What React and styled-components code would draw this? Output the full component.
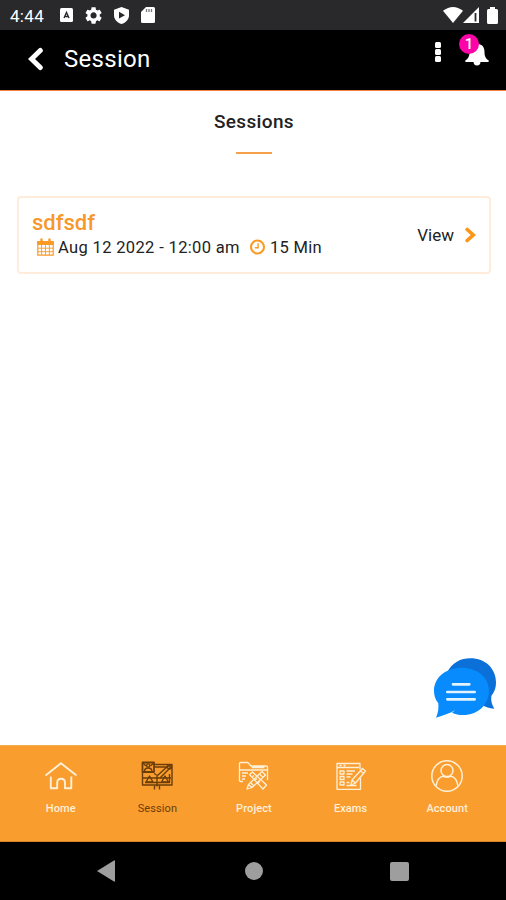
import React from 'react';
import styled, { createGlobalStyle } from 'styled-components';

function App() {
    return (
        <>
            <GlobalStyle />
            <Screen>
                <StatusBar>
                    <Clock>4:44</Clock>
                    <StatusLeft>
                        <KeyboardIcon />
                        <GearIcon />
                        <ShieldIcon />
                        <CardIcon />
                    </StatusLeft>
                    <StatusRight>
                        <WifiIcon />
                        <SignalIcon />
                        <BatteryIcon />
                    </StatusRight>
                </StatusBar>
                <Header>
                    <BackIcon />
                    <HeaderTitle>Session</HeaderTitle>
                    <Dots>
                        <Dot />
                        <Dot />
                        <Dot />
                    </Dots>
                    <BellButton>
                        <BellIcon />
                        <Badge>1</Badge>
                    </BellButton>
                </Header>
                <Content>
                    <Heading>Sessions</Heading>
                    <HeadingLine />
                    <SessionCard>
                        <SessionInfo>
                            <SessionName>sdfsdf</SessionName>
                            <SessionMeta>
                                <CalendarIcon />
                                <MetaText $width="182px" $spacing=".35px">Aug 12 2022 - 12:00 am</MetaText>
                                <ClockIcon />
                                <MetaText $spacing=".3px">15 Min</MetaText>
                            </SessionMeta>
                        </SessionInfo>
                        <ViewText>View</ViewText>
                        <ArrowIcon />
                    </SessionCard>
                    <ChatButton>
                        <ChatIcon />
                    </ChatButton>
                </Content>
                <TabBar>
                    <Tab><HomeIcon /><TabLabel>Home</TabLabel></Tab>
                    <Tab $active><BoardIcon /><TabLabel>Session</TabLabel></Tab>
                    <Tab><FolderIcon /><TabLabel>Project</TabLabel></Tab>
                    <Tab><ExamIcon /><TabLabel>Exams</TabLabel></Tab>
                    <Tab><UserIcon /><TabLabel>Account</TabLabel></Tab>
                </TabBar>
                <SystemBar>
                    <svg width="18" height="22" viewBox="0 0 18 22"><path d="M0 11 17 .5Q18 0 18 1V21Q18 22 17 21.5Z" fill="#9e9e9e" /></svg>
                    <HomeCircle />
                    <RecentSquare />
                </SystemBar>
            </Screen>
        </>
    )
}

export default App;

// status bar icons

function KeyboardIcon() {
    return (
        <svg width="13" height="14" viewBox="0 0 13 14">
            <rect width="13" height="14" rx="1.5" fill="#fff" />
            <path d="M4 10 6.500 4.500l2.500 5.500M5 8.500h3" fill="none" stroke="#29292b" strokeWidth="1.4" />
        </svg>
    )
}

function GearIcon() {
    return (
        <svg width="18" height="18" viewBox="2 1 21 21" fill="#fff">
            <path d="M19.14 12.94c.04-.3.06-.61.06-.94 0-.32-.02-.64-.07-.94l2.03-1.58c.18-.14.23-.41.12-.61l-1.92-3.32c-.12-.22-.37-.29-.59-.22l-2.39.96c-.5-.38-1.03-.7-1.62-.94l-.36-2.54c-.04-.24-.24-.41-.48-.41h-3.84c-.24 0-.43.17-.47.41l-.36 2.54c-.59.24-1.13.57-1.62.94l-2.39-.96c-.22-.08-.47 0-.59.22L2.74 8.87c-.12.21-.08.47.12.61l2.03 1.58c-.05.3-.09.63-.09.94s.02.64.07.94l-2.03 1.58c-.18.14-.23.41-.12.61l1.92 3.32c.12.22.37.29.59.22l2.39-.96c.5.38 1.03.7 1.62.94l.36 2.54c.05.24.24.41.48.41h3.84c.24 0 .44-.17.47-.41l.36-2.54c.59-.24 1.13-.56 1.62-.94l2.39.96c.22.08.47 0 .59-.22l1.92-3.32c.12-.22.07-.47-.12-.61l-2.01-1.58zM12 15.6c-1.98 0-3.6-1.62-3.6-3.6s1.62-3.6 3.6-3.6 3.6 1.62 3.6 3.6-1.62 3.6-3.6 3.6z" />
        </svg>
    )
}

function ShieldIcon() {
    return (
        <svg width="15" height="17" viewBox="0 0 15 17">
            <path d="M7.5 0 15 2.8V8c0 4.500-3.200 7.800-7.500 9C3.200 15.800 0 12.500 0 8V2.800Z" fill="#fff" />
            <path d="M5 4.800 11 8.200 5 11.600Z" fill="#29292b" />
        </svg>
    )
}

function CardIcon() {
    return (
        <svg width="14" height="16" viewBox="0 0 14 16">
            <path d="M5 0h7.500Q14 0 14 1.500v13Q14 16 12.500 16h-11Q0 16 0 14.500V5Z" fill="#fff" />
            <path d="M5.500 2v3M8 2v3M10.500 2v3" stroke="#77777a" strokeWidth="1.300" />
        </svg>
    )
}

function WifiIcon() {
    return (
        <svg width="20" height="16" viewBox="0 0 20 16">
            <path d="M0 3.800Q10-3.800 20 3.800L10 16Z" fill="#fff" />
        </svg>
    )
}

function SignalIcon() {
    return (
        <svg width="16" height="16" viewBox="0 0 16 16">
            <path d="M0 16 16 0V16Z" fill="#fff" />
            <path d="M12.500 6v8.500" stroke="#29292b" strokeWidth="1.800" />
        </svg>
    )
}

function BatteryIcon() {
    return (
        <svg width="11" height="17" viewBox="0 0 11 17">
            <path d="M3 0h5v2h1.500Q11 2 11 3.500v12Q11 17 9.500 17h-8Q0 17 0 15.500v-12Q0 2 1.500 2H3Z" fill="#fff" />
        </svg>
    )
}

// header icons

function BackIcon() {
    return (
        <svg width="16" height="24" viewBox="0 0 16 24">
            <path d="M12.300 3.500 3.500 12l8.800 8.500" fill="none" stroke="#fff" strokeWidth="5" strokeLinecap="round" />
        </svg>
    )
}

function BellIcon() {
    return (
        <svg width="24" height="24" viewBox="0 0 24 24" fill="#fff">
            <path d="M12 0q1.500 0 1.500 2C18 2.800 19.500 6 19.500 10c0 5 1.500 6.500 4 8.300Q24.300 20 23 20H1Q-.3 20 .5 18.300C3 16.500 4.500 15 4.500 10c0-4 1.500-7.200 6-8q0-2 1.500-2Z" />
            <path d="M8.500 19.500h7q0 4-3.500 4t-3.500-4Z" />
        </svg>
    )
}

// session card icons

function CalendarIcon() {
    return (
        <svg width="17" height="18" viewBox="0 0 17 18" fill="none" stroke="#fb9a24">
            <path d="M.8 3.500h15.400v13.700H.8Z" strokeWidth="1.200" />
            <path d="M.8 3.500h15.400V6.500H.8Z" fill="#fb9a24" />
            <path d="M4.500 1.500v3M12.500 1.500v3" strokeWidth="2.400" strokeLinecap="round" />
            <path d="M4.600 6v11M8.500 6v11M12.400 6v11M1 10.200h15M1 13.700h15" strokeWidth=".9" />
        </svg>
    )
}

function ClockIcon() {
    return (
        <svg width="16" height="16" viewBox="0 0 16 16" fill="none" stroke="#fb9a24">
            <circle cx="7.500" cy="8" r="6.500" strokeWidth="2.100" />
            <path d="M8.100 4.300v4.400H4.800" strokeWidth="1.400" />
        </svg>
    )
}

function ArrowIcon() {
    return (
        <svg width="11" height="16" viewBox="0 0 11 16">
            <path d="M2.200 2.500 8.300 8l-6.100 5.500" fill="none" stroke="#fb9618" strokeWidth="3.700" strokeLinecap="round" />
        </svg>
    )
}

function ChatIcon() {
    return (
        <svg width="62" height="60" viewBox="42 39 186 180">
            <path d="M80 85C96 52 122 40 151 40c45 0 77 31 77 72 0 17-4 28-14 41-2 15 2 27 9 38-15-2-27-5-38-12Z" fill="#0b70d8" />
            <path d="M125 68c47 0 82 29 82 69 0 42-34 73-77 73-14 0-24-3-34-7l10-8c-18 11-36 16-58 23 7-15 8-28 7-43-9-12-13-23-13-38 0-40 36-69 83-69Z" fill="#078bfd" />
            <path d="M99 118h49M82 141h82M82 163h82" stroke="#e4f4ff" strokeWidth="8" strokeLinecap="round" />
        </svg>
    )
}

// tab bar icons

function HomeIcon() {
    return (
        <TabSvg viewBox="0 0 34 32" strokeWidth="1.900">
            <path d="M1.500 15.500 17 3.300l15.500 12.200" />
            <path d="M6.800 16.500v11.700h6.400v-5.500q0-4 3.900-4t3.900 4v5.500h6.300V16.500" />
        </TabSvg>
    )
}

function BoardIcon() {
    return (
        <TabSvg viewBox="0 0 34 32" strokeWidth="1.400">
            <path d="M2.500 2.500h11.500v9.500H2.500Z" strokeWidth="1.800" />
            <circle cx="8.200" cy="5.500" r="1.600" />
            <path d="M4.500 11.500q0-3.500 3.700-3.500t3.700 3.500M3 3l3 3M13.500 3l-3 3" />
            <path d="M14.500 4.500H32V25H2.500V12.500M14.500 7H27M5 22.500h24.500V14" />
            <path d="M14 13.500l3.500 2 11-10 2 2-10.500 10.500" />
            <path d="M17 16v10.500M14.500 29.500V25.500M19.500 29.500V25.500M3 18h28" />
            <path d="M6 22l3.500-6 3.500 6ZM21.500 22l3.500-6 3.500 6Z" />
            <circle cx="29.500" cy="7" r="2" />
        </TabSvg>
    )
}

function FolderIcon() {
    return (
        <TabSvg viewBox="0 0 34 32" strokeWidth="1.300">
            <path d="M6 21.500H3.500q-1 0-1-1V3.500q0-1 1-1h7.300l3.200 3.500H29q1.500 0 1.500 1.500V20M2.500 10H30.500M14.500 7.500h13" />
            <path d="M5 13h6M5 16h4M5 19h3" />
            <path d="m12.500 14.500 3-2.500L29.500 25l-3.500 4ZM15 17l2-1.500M18 20l2-1.500M21 23l2-1.500" />
            <path d="m25 11.500 3.500 3.500L15 27.500l-5 1.500 1.500-4.500ZM22.500 14l3.500 3.500M11.500 24.500l3.500 3M13 22l3.500 3.500" />
        </TabSvg>
    )
}

function ExamIcon() {
    return (
        <TabSvg viewBox="0 0 34 32" strokeWidth="1.300">
            <path d="M26 9.500V3.500H3v25.800h23.500V18M3 7.500h22M5.500 5.500h2M9.500 5.500h2" />
            <path d="M6 11h4v3H6ZM6 16.500h4v3H6ZM6 22h4v3H6ZM12.500 11h8.500M12.500 14h6M12.500 17h4M12.500 22.500h3M12.500 25.500h10" />
            <path d="m28.500 8.500 3 2.500L21.500 23l-4.500 2 1-5ZM26.500 11l3 2.500M18 20l3.500 3" />
        </TabSvg>
    )
}

function UserIcon() {
    return (
        <TabSvg viewBox="0 0 34 32" strokeWidth="1.500">
            <circle cx="17" cy="16" r="15.200" />
            <circle cx="17" cy="10.500" r="6" />
            <path d="M6 25.800Q7.500 16.800 13.200 16.200q3.800 2.200 7.600 0Q26.500 16.800 28 25.800" />
        </TabSvg>
    )
}

const GlobalStyle = createGlobalStyle`
* {
    box-sizing: border-box;
}
body {
    margin: 0;
    font-family: Roboto, sans-serif;
}
svg {
    display: block;
    flex-shrink: 0;
}
`;

const Screen = styled.div`
display: flex;
flex-direction: column;
width: 506px;
height: 900px;
background-color: #fff;
`;

const StatusBar = styled.div`
display: flex;
align-items: center;
height: 30px;
padding: 0 8px 0 10px;
background-color: #29292b;
color: #fff;
`;

const Clock = styled.span`
width: 50px;
font-size: 17px;
line-height: 30px;
letter-spacing: .3px;
padding-top: 2px;
`;

const StatusLeft = styled.div`
display: flex;
align-items: center;
gap: 11.500px;
`;

const StatusRight = styled.div`
display: flex;
align-items: center;
margin-left: auto;

svg:last-child {
    margin-left: 8px;
}
`;

const Header = styled.div`
display: flex;
align-items: center;
height: 61px;
padding: 0 17px 3px 28px;
background-color: #000;
border-bottom: 1px solid #f4813f;
color: #fff;
`;

const HeaderTitle = styled.h1`
flex: 1;
margin: 0 0 0 20px;
font-size: 24px;
font-weight: 400;
letter-spacing: .3px;
`;

const Dots = styled.div`
display: flex;
flex-direction: column;
gap: 1px;
margin: 0 24px 13px 0;
`;

const Dot = styled.i`
width: 6.500px;
height: 6px;
border-radius: 1.500px;
background-color: #fff;
`;

const BellButton = styled.div`
position: relative;
margin-bottom: 9px;
`;

const Badge = styled.span`
position: absolute;
top: -8px;
left: -6px;
width: 20px;
height: 20px;
border-radius: 50%;
background-color: #fb04a8;
font-size: 15px;
font-weight: 500;
line-height: 20px;
text-align: center;
`;

const Content = styled.main`
position: relative;
display: flex;
flex-direction: column;
align-items: center;
flex: 1;
padding: 18px 15px 0 17px;
color: #222;
`;

const Heading = styled.h2`
margin: 0;
font-size: 19px;
font-weight: 500;
line-height: 26px;
letter-spacing: .35px;
`;

const HeadingLine = styled.div`
width: 36px;
height: 2px;
margin-top: 17px;
background-color: #f6a04a;
`;

const SessionCard = styled.div`
display: flex;
align-items: center;
width: 474px;
height: 78px;
margin-top: 42px;
padding: 0 13px 0 12px;
border: 2px solid #ffecdb;
border-radius: 4px;
`;

const SessionInfo = styled.div`
flex: 1;
padding-bottom: 2px;
`;

const SessionName = styled.div`
padding-left: 1px;
color: #f8982a;
font-size: 22px;
font-weight: 500;
line-height: 26px;
`;

const SessionMeta = styled.div`
display: flex;
align-items: center;
height: 23px;
padding-left: 6px;
`;

const MetaText = styled.span`
width: ${props => props.$width || 'auto'};
margin: 0 10px 0 4px;
font-size: 16.500px;
letter-spacing: ${props => props.$spacing};
white-space: nowrap;
`;

const ViewText = styled.span`
margin-right: 11px;
font-size: 17px;
`;

const ChatButton = styled.div`
position: absolute;
right: 10px;
bottom: 27px;
`;

const TabBar = styled.nav`
display: grid;
grid-template-columns: repeat(5, 1fr);
height: 97px;
padding: 14px 11px 0 12px;
border-top: 1px solid #f5ac50;
border-bottom: 1px solid #d58324;
background-color: #fa9d2f;
`;

const Tab = styled.div`
display: flex;
flex-direction: column;
align-items: center;
padding-left: 1px;
color: ${props => props.$active ? '#6b3d08' : '#fff0d8'};
font-weight: ${props => props.$active ? 400 : 500};
`;

const TabSvg = styled.svg`
width: 34px;
height: 32px;
fill: none;
stroke: currentColor;
stroke-linejoin: round;
`;

const TabLabel = styled.span`
margin-top: 10px;
font-size: 11px;
line-height: 14px;
letter-spacing: .1px;
`;

const SystemBar = styled.div`
display: flex;
align-items: center;
justify-content: space-between;
height: 58px;
padding: 0 97px;
background-color: #000;
`;

const HomeCircle = styled.div`
width: 18px;
height: 18px;
margin-left: 2px;
border-radius: 50%;
background-color: #9e9e9e;
`;

const RecentSquare = styled.div`
width: 19px;
height: 19px;
border-radius: 2px;
background-color: #9e9e9e;
`;
